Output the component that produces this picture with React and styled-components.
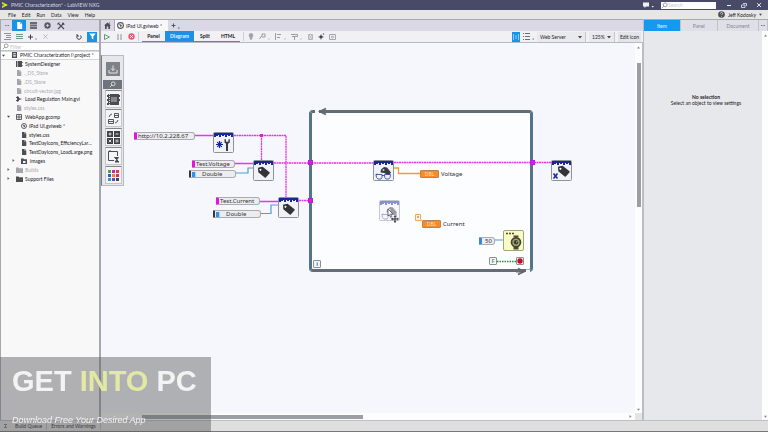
import styled, { createGlobalStyle, css } from "styled-components";

const GlobalStyle = createGlobalStyle`
  * {
    box-sizing: border-box;
  }
  body {
    margin: 0;
    overflow: hidden;
    font-family: Lato, "Open Sans", sans-serif;
    font-size: 5px;
    line-height: 8px;
    color: #232329;
  }
  button, input, select {
    font: inherit;
    color: inherit;
    margin: 0;
    padding: 0;
    border: 0;
    border-radius: 0;
    background: none;
  }
  svg {
    display: block;
    flex: none;
  }
`;

const Window = styled.div`
  display: flex;
  flex-direction: column;
  height: 100vh;
  background: #e4e4e3;
  border-bottom: 1px solid #77777b;
`;

const TitleBar = styled.header`
  display: flex;
  align-items: center;
  height: 10px;
  flex: none;
  padding: 0 3px 0 2px;
  gap: 3px;
  background: #484a67;
  color: #d9dae4;
`;

const Title = styled.h1`
  margin: 0;
  flex: 1;
  font-size: 5px;
  font-weight: 400;
`;

const SearchBox = styled.label`
  display: flex;
  align-items: center;
  width: 55px;
  height: 7px;
  margin: 0 4px;
  background: #fff;
  input {
    width: 40px;
    height: 7px;
    outline: 0;
  }
  input::placeholder {
    color: #c8c8d0;
  }
`;

const WindowButton = styled.button`
  display: grid;
  place-items: center;
  width: 12px;
  height: 9px;
`;

const MenuBar = styled.nav`
  display: flex;
  align-items: center;
  flex: none;
  height: 9px;
  padding: 0 6px 0 8px;
  gap: 6px;
  background: #e6e6e4;
`;

const MenuItem = styled.button`
  line-height: 8px;
`;

const User = styled.button`
  display: flex;
  align-items: center;
  gap: 3px;
  margin-left: auto;
`;

const Main = styled.div`
  display: flex;
  flex: 1;
  min-height: 0;
`;

const Sidebar = styled.aside`
  display: flex;
  flex-direction: column;
  width: 101px;
  flex: none;
  background: #f8f8f9;
  border-left: 1px solid #a7a7b2;
  border-right: 2px solid #a7a7b0;
`;

const TabStrip = styled.div`
  display: flex;
  flex: none;
  height: 12px;
  background: #d9d8e4;
  border-top: 1px solid #a9a9b6;
`;

const IconTab = styled.button`
  display: grid;
  place-items: center;
  width: ${({ $w }) => $w || 14}px;
  background: ${({ $active }) => ($active ? "#1793ea" : "transparent")};
`;

const Toolbar = styled.div`
  display: flex;
  align-items: center;
  flex: none;
  height: 12px;
  gap: ${({ $gap }) => $gap || 3}px;
  padding: 0 2px;
  background: #f1f1f5;
  border-bottom: 1px solid #b9b9c6;
`;

const ToolButton = styled.button`
  display: grid;
  place-items: center;
  width: ${({ $w }) => $w || 8}px;
  height: 10px;
  background: ${({ $active }) => ($active ? "#1793ea" : "transparent")};
`;

const Spacer = styled.div`
  flex: 1;
`;

const FilterBox = styled.label`
  display: flex;
  align-items: center;
  flex: none;
  height: 8px;
  gap: 1px;
  padding-left: 1px;
  background: #fff;
  border-bottom: 1px solid #c4c4cc;
  input {
    width: 70px;
    height: 7px;
    outline: 0;
  }
  input::placeholder {
    color: #c2c2ca;
  }
`;

const Tree = styled.ul`
  display: grid;
  grid-auto-rows: 1fr;
  height: 132px;
  margin: 0;
  padding: 0;
  list-style: none;
  line-height: 6px;
`;

const TreeRow = styled.li`
  display: flex;
  align-items: center;
  gap: 2px;
  padding-left: ${({ $depth }) => 1 + $depth * 5}px;
  color: ${({ $dim }) => ($dim ? "#a9a9ae" : "#212126")};
  white-space: nowrap;
  ${({ $root }) =>
    $root &&
    css`
      background: #fff;
      border: 1px solid #d6d6dd;
      border-width: 1px 0;
    `}
`;

const Twisty = styled.span`
  width: 7px;
  height: 4px;
  display: grid;
  place-items: center start;
`;

const Editor = styled.main`
  display: flex;
  flex-direction: column;
  flex: 1;
  min-width: 0;
`;

const HomeTab = styled.button`
  display: grid;
  place-items: center;
  width: 14px;
  border-right: 1px solid #a9a9b6;
`;

const FileTab = styled.button`
  display: flex;
  align-items: center;
  gap: 2px;
  width: 53px;
  padding-left: 2px;
  background: #f8f8fb;
`;

const AddTab = styled.button`
  display: grid;
  place-items: center;
  width: 14px;
`;

const Separator = styled.span`
  width: 1px;
  height: 9px;
  background: #cfcfd8;
`;

const Views = styled.div`
  display: flex;
  height: 11px;
`;

const ViewButton = styled.button`
  width: ${({ $w }) => $w}px;
  border-bottom: 1px solid #3f8fc8;
  background: ${({ $active }) => ($active ? "#1f8fe3" : "transparent")};
  color: ${({ $active }) => ($active ? "#e4f3ff" : "#222")};
  font-weight: 700;
`;

const Picker = styled.label`
  display: flex;
  align-items: center;
  width: ${({ $w }) => $w}px;
  height: 10px;
  padding: 0 3px;
  background: #e9e9ee;
  border-right: 1px solid #c6c6d0;
  select {
    flex: 1;
    min-width: 0;
    appearance: none;
    outline: 0;
  }
`;

const EditIcon = styled.button`
  width: 23px;
  height: 10px;
  background: #e3e3e9;
  white-space: nowrap;
`;

const Workspace = styled.div`
  display: grid;
  grid-template-columns: 1fr 7px;
  grid-template-rows: 1fr 7px;
  flex: 1;
  min-height: 0;
  border-right: 1px solid #bcbcc6;
`;

const Canvas = styled.section`
  position: relative;
  overflow: hidden;
  background: #f5f7fc;
`;

const Scroll = styled.div`
  display: flex;
  flex-direction: ${({ $across }) => ($across ? "row" : "column")};
  align-items: center;
  justify-content: space-between;
  padding: ${({ $across }) => ($across ? "1px 3px 1px 41px" : "3px 1px 2px")};
  background: #fdfdfe;
`;

const Thumb = styled.div`
  background: #9d9ea3;
  ${({ $across, $size }) =>
    $across
      ? css`
          width: ${$size}px;
          height: 4px;
        `
      : css`
          width: 4px;
          height: ${$size}px;
          margin: 14px 0 auto;
        `}
`;

const Palette = styled.div`
  position: absolute;
  left: 0;
  top: 12px;
  width: 23px;
  padding: 1px;
  background: #e6e7ea;
  border: 1px solid #b9bac0;
  border-left-color: #777a82;
`;

const PaletteTop = styled.button`
  display: grid;
  place-items: center;
  width: 100%;
  height: 23px;
`;

const PaletteSearch = styled.button`
  display: grid;
  place-items: center;
  width: 100%;
  height: 9px;
  background: #6f747c;
`;

const PaletteItem = styled.button`
  display: grid;
  place-items: center;
  width: 17px;
  height: 18px;
  margin: 1px 0 0 2px;
  background: #f4f4f6;
  border: 1px solid #c5c6cb;
  border-top-color: #82858b;
`;

const Wires = styled.svg`
  position: absolute;
  left: 0;
  top: 0;
`;

const Placed = styled.div`
  position: absolute;
  left: ${({ $x }) => $x}px;
  top: ${({ $y }) => $y}px;
`;

const Loop = styled(Placed)`
  width: 224px;
  height: 162px;
  background: #fbfdff;
  border: 3px solid #557389;
  border-top-color: #646d77;
  border-bottom-color: #646d77;
  border-radius: 4px;
`;

const Constant = styled(Placed)`
  display: flex;
  align-items: center;
  width: ${({ $w }) => $w}px;
  height: 8px;
  padding-left: ${({ $indent }) => $indent || 1}px;
  font: 6px/6px "Noto Sans", sans-serif;
  white-space: nowrap;
  color: #2f2f35;
  background: #ededf0;
  border: 1px solid #aaaab0;
  border-left: ${({ $edge }) => $edge || "3px solid #e513de"};
  border-radius: 1px 3px 3px 1px;
`;

const TypeMark = styled.span`
  width: 4px;
  height: 5px;
  margin-right: 6px;
  background: #2f93e8;
  border-right: 1px solid #a8d4fa;
`;

const Terminal = styled(Placed)`
  display: grid;
  place-items: center;
  width: 19px;
  height: 8px;
  font: 5px/5px "Noto Sans", sans-serif;
  color: #ffe3c4;
  background: #f98a25;
  border: 1px solid #b98352;
  border-radius: 1px;
`;

const Label = styled(Placed)`
  font: 6px/8px "Noto Sans", sans-serif;
  color: #2a2a30;
`;

const Tunnel = styled(Placed)`
  width: 5px;
  height: 5px;
  background: #f010e4;
  border: 1px solid #a726d6;
`;

const Chip = styled(Placed)`
  display: grid;
  place-items: center;
  width: 8px;
  height: 8px;
  font: 600 6px/6px "Noto Sans", sans-serif;
  color: ${({ $color }) => $color};
  background: #f4f5f8;
  border: 1px solid #8b8f98;
  border-radius: 1px;
`;

const Inspector = styled.aside`
  display: flex;
  flex-direction: column;
  width: 125px;
  flex: none;
  background: #e7e8ec;
  border-left: 1px solid #bcbcc6;
`;

const InspectorTab = styled.button`
  flex: ${({ $grow }) => $grow} 0 0;
  background: ${({ $active }) => ($active ? "#139af0" : "#dfdfe7")};
  color: ${({ $active }) => ($active ? "#e8f6ff" : "#85858d")};
  border-right: 1px solid #c1c1cb;
  svg {
    margin: 0 auto;
  }
`;

const InspectorBody = styled.div`
  display: grid;
  grid-template-columns: 1fr 6px;
  flex: 1;
`;

const Empty = styled.div`
  padding: 63px 0 0 6px;
  text-align: center;
  line-height: 6px;
  p {
    margin: 0;
  }
`;

const StatusBar = styled.footer`
  display: flex;
  align-items: center;
  flex: none;
  height: 11px;
  padding-left: 4px;
  background: #dfdfdf;
  border-top: 1px solid #bebec4;
  svg {
    margin-right: 4px;
  }
`;

const StatusTab = styled.button`
  padding: 0 4px;
  border-right: 1px solid #b9b9be;
`;

const Watermark = styled.div`
  position: fixed;
  left: 0;
  bottom: 0;
  width: 211px;
  height: 75px;
  padding: 7px 12px 0;
  background: rgba(88, 89, 92, 0.45);
  font-family: "Liberation Sans", Arial, sans-serif;
  color: #f3f3f4;
  white-space: nowrap;
  pointer-events: none;
  p {
    margin: 0;
  }
`;

const Brand = styled.p`
  font-size: 29px;
  font-weight: 700;
  line-height: 34px;
  span {
    color: #e3e8a5;
  }
`;

const Slogan = styled.p`
  padding-top: 16px;
  font-size: 9px;
  font-style: italic;
  line-height: 12px;
`;

function Caret({ color = "#44444c", size = 4 }) {
  return (
    <svg width={size} height={size} viewBox="0 0 4 4">
      <path d="M0 1h4L2 3.5z" fill={color} />
    </svg>
  );
}

function Magnifier({ color = "#85858e", size = 7 }) {
  return (
    <svg width={size} height={size} viewBox="0 0 7 7" fill="none" stroke={color} strokeWidth="0.8">
      <circle cx="4.2" cy="2.8" r="1.9" />
      <path d="M2.8 4.2L.8 6.2" />
    </svg>
  );
}

function PageIcon({ color = "#5c5c64", size = 6 }) {
  return (
    <svg width={size} height={size} viewBox="0 0 6 6">
      <path d="M1 0h2.6v1.8h1.7V6H1zM4 0l1.3 1.4H4z" fill={color} />
    </svg>
  );
}

function GlobeIcon({ size = 7 }) {
  return (
    <svg width={size} height={size} viewBox="0 0 7 7" fill="none">
      <circle cx="3.5" cy="3.5" r="2.9" stroke="#55555c" strokeWidth="1.1" />
      <path d="M2 2l2 .4 1 1.4-1.4 1.4L3 3.8z" fill="#55555c" />
    </svg>
  );
}

function TreeIcon({ kind, dim }) {
  const color = dim ? "#a3a3a9" : "#4e4e56";
  if (kind === "page") return <PageIcon color={color} />;
  if (kind === "globe") return <GlobeIcon size={6} />;
  return (
    <svg width="7" height="6" viewBox="0 0 7 6" fill={color}>
      {kind === "project" && <path d="M1 0h5v6H1zM2.2 1.2v1h2.6v-1zm0 2v1.4h2.6V3.2z" fillRule="evenodd" />}
      {kind === "system" && <path d="M0 0h1v6H0zM1.6 0H6v6H1.6zM6.3 1h.7v1h-.7zm0 3h.7v1h-.7z" />}
      {kind === "vi" && <path d="M1 0l2 1v1l3 1-3 1v1L1 6zM0 1h1v1H0zm0 3h1v1H0z" />}
      {kind === "component" && (
        <path d="M.5.5h5v5h-5zM.5 3h5M3 .5v5" fill="none" stroke={color} strokeWidth="0.9" />
      )}
      {kind === "folder" && <path d="M0 .5h2.5l.7.8H7V6H0z" />}
      {kind === "images" && <path d="M0 .5h2.5l.7.8H6V6H0zM2 3v2h2.5V3z" fillRule="evenodd" />}
    </svg>
  );
}

const FILES = [
  { name: "PMIC Characterization I\\project *", kind: "project", depth: 0, open: true, root: true },
  { name: "SystemDesigner", kind: "system", depth: 1 },
  { name: "._DS_Store", kind: "page", depth: 1, dim: true },
  { name: ".DS_Store", kind: "page", depth: 1, dim: true },
  { name: "circuit-vector.jpg", kind: "page", depth: 1, dim: true },
  { name: "Load Regulation Main.gvi", kind: "vi", depth: 1 },
  { name: "styles.css", kind: "page", depth: 1, dim: true },
  { name: "WebApp.gcomp", kind: "component", depth: 1, open: true },
  { name: "iPad UI.gviweb *", kind: "globe", depth: 2 },
  { name: "styles.css", kind: "page", depth: 2 },
  { name: "TestDayIcons_EfficiencyLar...", kind: "page", depth: 2 },
  { name: "TestDayIcons_LoadLarge.png", kind: "page", depth: 2 },
  { name: "images", kind: "images", depth: 2, closed: true },
  { name: "Builds", kind: "folder", depth: 1, dim: true, closed: true },
  { name: "Support Files", kind: "folder", depth: 1, closed: true },
];

function ProjectTree() {
  return (
    <Tree>
      {FILES.map(({ name, kind, depth, dim, open, closed, root }, i) => (
        <TreeRow key={i} $depth={depth} $dim={dim} $root={root}>
          <Twisty>
            {open && <Caret size={3} />}
            {closed && (
              <svg width="3" height="3" viewBox="0 0 3 3">
                <path d="M.5 0L2.5 1.5L.5 3z" fill="#66666e" />
              </svg>
            )}
          </Twisty>
          <TreeIcon kind={kind} dim={dim} />
          {name}
        </TreeRow>
      ))}
    </Tree>
  );
}

function TagShape() {
  return (
    <path
      d="M5 8.6Q5 7.8 5.8 7.6L9.6 6.7 16.5 12.3Q17 12.8 16.6 13.3L12.8 17.4Q12.3 17.9 11.7 17.4L5.3 12.2zM7.4 8.7a1 1 0 1 0 .1 0z"
      fill="#333438"
      fillRule="evenodd"
    />
  );
}

function VINode({ x, y, kind, faded }) {
  return (
    <Placed $x={x} $y={y}>
      <svg width="21" height="21" viewBox="0 0 21 21" opacity={faded ? 0.5 : 1}>
        <rect x=".5" y=".5" width="20" height="20" rx="1" fill="#f1f2f6" stroke="#8f929c" />
        <path
          d="M1 1h19v4h-2V3h-1v1h-2V3h-1v2h-2V3h-1v1h-2V3H8v2H6V3H5v1H3V3v2H1z"
          fill="#1a2793"
        />
        {kind === "open" && (
          <>
            <path d="M6.5 9v7M3 12.5h7M4.200 10.2l4.600 4.600M8.800 10.2l-4.600 4.600" stroke="#16259c" strokeWidth="1.2" />
            <path d="M11.5 7v3.500l1.500 1.300V19h2v-7.200l1.800-1.300V7l-1.400.5v2.200h-2.400V7.500z" fill="#393a3f" />
          </>
        )}
        {kind === "tag" && <TagShape />}
        {kind === "close" && (
          <>
            <g transform="translate(2 -1)">
              <TagShape />
            </g>
            <path d="M2.500 13.500l4 5M6.500 13.500l-4 5" stroke="#16259c" strokeWidth="1.5" />
          </>
        )}
        {kind === "read" && (
          <>
            <path d="M8 9.500l3-2.500 3 .5 4 5-2.500 3.500-4-3-4-.5z" fill="#3a3b41" />
            <circle cx="10.500" cy="10" r="1" fill="#c9ccd6" />
            <path
              d="M3 14.500h6v3l-1 1.500H5l-1.500-1.500zM11.500 14.500h6l-.5 3-1.200 1.500h-2.800l-1.200-1.500zM9 15.500h2.500M3 14.500l1-1"
              fill="#f1f3fb"
              stroke="#27399e"
              strokeWidth="0.8"
            />
          </>
        )}
      </svg>
    </Placed>
  );
}

function DiagramWires() {
  return (
    <Wires width="534" height="371" viewBox="0 0 534 371" fill="none">
      <g stroke="#ea35e4" strokeWidth="1.3">
        <path d="M94 92.500h19M134 120.500h20M159 158.500h20" />
        <g strokeDasharray="2 .5">
          <path d="M133 92.500h52v63M160.500 92.500V118" />
          <path d="M173 120h99M293 119.500h158M198 157.500h12" />
        </g>
      </g>
      <rect x="159" y="91" width="3" height="3" fill="#df18d9" />
      <path d="M134 130h13v-5h6M160 170.500h10v-8.500h8M393 197h10" stroke="#4d9fd6" strokeWidth="1.2" />
      <path d="M293 125h4.500v5.500H319" stroke="#f1994a" strokeWidth="1.3" />
      <path d="M396 218.500h19" stroke="#27933b" strokeWidth="1.3" strokeDasharray="1.5 1" />
      <path d="M214 68.500h4M425 228.500h4" stroke="#f6f8fc" strokeWidth="4" />
      <path d="M218 68.500h7M415 228.500h8" stroke="#646d77" strokeWidth="2" />
      <path d="M225 65.500l-6 3 6 3M417 225.500l6 3-6 3" stroke="#62676e" strokeWidth="1.8" />
    </Wires>
  );
}

function Diagram() {
  return (
    <>
      <Loop $x={208} $y={67} />
      <DiagramWires />

      <Constant $x={33} $y={89} $w={61}>http://10.2.228.67</Constant>
      <VINode x={112} y={89} kind="open" />
      <Constant $x={91} $y={117} $w={43}>Test.Voltage</Constant>
      <Constant $x={88} $y={127} $w={47} $edge="2px solid #35363c">
        <TypeMark />
        Double
      </Constant>
      <VINode x={152} y={117} kind="tag" />
      <Constant $x={115} $y={154} $w={44}>Test.Current</Constant>
      <Constant $x={112} $y={167} $w={48} $edge="2px solid #35363c">
        <TypeMark />
        Double
      </Constant>
      <VINode x={177} y={154} kind="tag" />

      <Tunnel $x={207} $y={117} />
      <Tunnel $x={207} $y={155} />
      <Tunnel $x={429} $y={117} />

      <VINode x={272} y={117} kind="read" />
      <Terminal $x={319} $y={127}>DBL</Terminal>
      <Label $x={340} $y={127}>Voltage</Label>

      <VINode x={278} y={157} kind="read" faded />
      <Placed $x={286} $y={166}>
        <svg width="13" height="14" viewBox="0 0 13 14">
          <path d="M1 0l5 5H3.500l1.300 2.600-1.200.6L2.300 5.600 1 7z" fill="#fff" stroke="#555761" strokeWidth="0.8" />
          <path
            d="M8 6l1.500 1.700H8.500v1.800h1.800V8.500L12 10l-1.700 1.500v-1H8.500v1.800h1L8 14l-1.500-1.700h1v-1.800H5.700v1L4 10l1.700-1.500v1h1.800V7.700h-1z"
            fill="#36373d"
          />
        </svg>
      </Placed>
      <Placed $x={314} $y={171}>
        <svg width="7" height="7" viewBox="0 0 7 7">
          <path d="M.5.500h5v4l1 2H.5z" fill="#fff2e2" stroke="#f3a65e" />
          <circle cx="3" cy="3" r="1" fill="#ee8a2d" />
        </svg>
      </Placed>
      <Terminal $x={321} $y={177}>DBL</Terminal>
      <Label $x={342} $y={177}>Current</Label>

      <Constant $x={378} $y={194} $w={16} $indent={3} $edge="3px solid #3c86dc">50</Constant>
      <Placed $x={402} $y={187}>
        <svg width="21" height="21" viewBox="0 0 21 21">
          <rect x=".5" y=".5" width="20" height="20" rx="1.5" fill="#fafbc2" stroke="#a1a37c" />
          <path d="M3 3.500h2M6 3.500h2M9 3.500h2" stroke="#4d4d35" strokeWidth="1.5" />
          <path d="M10.500 5.500h5v2h-5zM10.500 17h5v2.500h-5z" fill="#4b4b34" />
          <circle cx="13" cy="12.300" r="4.500" fill="#a6a77a" stroke="#44442f" strokeWidth="1.7" />
          <circle cx="13" cy="12.300" r="2.200" fill="#3c3c2a" />
          <path d="M13 12.300l1.500-1" stroke="#f1f1b6" strokeWidth="0.8" />
        </svg>
      </Placed>
      <Chip $x={388} $y={214} $color="#3f9b50">F</Chip>
      <Chip $x={415} $y={214}>
        <svg width="6" height="6" viewBox="0 0 6 6">
          <circle cx="3" cy="3" r="2.7" fill="#c20f28" />
        </svg>
      </Chip>
      <Chip $x={212} $y={217} $color="#2766c4">i</Chip>
      <VINode x={450} y={117} kind="close" />
    </>
  );
}

const SWATCHES = [
  "#46a84b", "#b331b8", "#e04038",
  "#3457c9", "#e8852c", "#d43168",
  "#2e9ac2", "#7c3fc0", "#47464d",
];

function FunctionPalette() {
  return (
    <Palette>
      <PaletteTop aria-label="Place">
        <svg width="14" height="14" viewBox="0 0 14 14" fill="none">
          <path d="M0 0h14v14H0z" fill="#7e8187" />
          <path d="M7 3.500v5M5 6.500l2 2 2-2M3 8v3h8V8" stroke="#e3e4e7" />
        </svg>
      </PaletteTop>
      <PaletteSearch aria-label="Search palette">
        <Magnifier color="#f0f0f2" />
      </PaletteSearch>
      <PaletteItem aria-label="Program flow">
        <svg width="13" height="13" viewBox="0 0 13 13">
          <path d="M1 1h11v11H1z" fill="#4a4c52" />
          <path d="M4 4h6v5H4z" fill="#85888f" />
          <path d="M0 2h1v2H0zM0 6h1v2H0zM0 10h1v2H0zM12 2h1v2h-1zM12 6h1v2h-1z" fill="#4a4c52" />
          <path d="M2.500 1v11" stroke="#dadbe0" strokeDasharray="1 1" />
        </svg>
      </PaletteItem>
      <PaletteItem aria-label="Data types">
        <svg width="13" height="13" viewBox="0 0 13 13" fill="none" stroke="#55575e">
          <path d="M7.500 1.500h4v4h-4zM1.500 7.500h5v4h-5zM7.500 3.500h4M1.500 9.500h5" />
          <path d="M2 5l1-2 2-1M11 8l-1 2-2 1" />
        </svg>
      </PaletteItem>
      <PaletteItem aria-label="Math">
        <svg width="13" height="13" viewBox="0 0 13 13">
          <path d="M0 0h6v6H0zM7 0h6v6H7zM0 7h6v6H0zM7 7h6v6H7z" fill="#3f4147" />
          <path
            d="M3 1.500v3M1.500 3h3M8.500 3h3M1.700 8.700l2.600 2.600M4.300 8.700l-2.600 2.600M8.500 9.200h3M8.500 10.800h3"
            stroke="#f0f0f2"
            strokeWidth="0.9"
          />
        </svg>
      </PaletteItem>
      <PaletteItem aria-label="Loops">
        <svg width="13" height="13" viewBox="0 0 13 13" fill="none" stroke="#4a4c52">
          <path d="M7 10.500H1.500v-9h9V6M3.500.500l-2 1" />
          <path d="M7.500 7.500h4L8 12h4z" fill="#4a4c52" />
        </svg>
      </PaletteItem>
      <PaletteItem aria-label="Hardware">
        <svg width="11" height="11" viewBox="0 0 11 11">
          {SWATCHES.map((fill, i) => (
            <rect key={fill} x={(i % 3) * 4} y={Math.floor(i / 3) * 4} width="3" height="3" fill={fill} />
          ))}
        </svg>
      </PaletteItem>
    </Palette>
  );
}

function SidebarPanel() {
  return (
    <Sidebar>
      <TabStrip>
        <IconTab aria-label="Collapse" $w={11}>
          <svg width="4" height="2" viewBox="0 0 4 2">
            <path d="M0 .5h1.500M2.500.500H4" stroke="#77777f" />
          </svg>
        </IconTab>
        <IconTab aria-label="Files" $active>
          <PageIcon color="#fff" size={7} />
        </IconTab>
        <IconTab aria-label="Hardware">
          <svg width="7" height="7" viewBox="0 0 7 7">
            <path d="M0 0h7v2H0zM0 2.500h7v2H0zM0 5h7v2H0z" fill="#6a6a72" />
          </svg>
        </IconTab>
        <IconTab aria-label="Data">
          <svg width="7" height="7" viewBox="0 0 7 7">
            <circle cx="3.500" cy="3.500" r="3.200" fill="#5d5d65" />
            <path d="M2 3.500h3M3.500 2v3" stroke="#d9d8e4" strokeWidth="0.8" />
          </svg>
        </IconTab>
        <IconTab aria-label="Tools">
          <svg width="8" height="8" viewBox="0 0 8 8" stroke="#4a4a52" fill="none">
            <path d="M1 1l6 6M7 1L1 7" strokeWidth="1.1" />
            <path d="M0 2.500L2.500.500M5.500.500v2h2" strokeWidth="0.8" />
          </svg>
        </IconTab>
      </TabStrip>
      <Toolbar $gap={4}>
        <ToolButton aria-label="Outline">
          <svg width="7" height="7" viewBox="0 0 7 7" stroke="#77777f">
            <path d="M0 .5h7M2 2.500h5M2 4.500h5M0 6.500h7" strokeWidth="0.8" />
          </svg>
        </ToolButton>
        <ToolButton aria-label="List">
          <svg width="7" height="7" viewBox="0 0 7 7" stroke="#5c8f73">
            <path d="M0 1.500h7M0 3.500h7M0 5.500h7" strokeWidth="0.9" />
          </svg>
        </ToolButton>
        <ToolButton aria-label="Add" $w={10}>
          <svg width="9" height="6" viewBox="0 0 9 6" stroke="#3b3b42">
            <path d="M2.500.500v5M0 3h5M7.500 5h1" />
          </svg>
        </ToolButton>
        <ToolButton aria-label="Remove">
          <svg width="5" height="5" viewBox="0 0 5 5" stroke="#a9a9b0">
            <path d="M.5.500l4 4M4.500.500l-4 4" strokeWidth="0.8" />
          </svg>
        </ToolButton>
        <Spacer />
        <ToolButton aria-label="Refresh">
          <svg width="6" height="6" viewBox="0 0 6 6" stroke="#45454d" fill="none">
            <path d="M1.500 1.500a2.200 2.200 0 1 0 3 0M0 1h2v2" />
          </svg>
        </ToolButton>
        <ToolButton aria-label="Filter" $active $w={10}>
          <svg width="7" height="7" viewBox="0 0 7 7">
            <path d="M.3.500h6.400L4.300 3.500V6.500L2.700 5.500v-2z" fill="#fff" />
          </svg>
        </ToolButton>
      </Toolbar>
      <FilterBox>
        <Magnifier />
        <input aria-label="Filter files" placeholder="Filter" />
      </FilterBox>
      <ProjectTree />
    </Sidebar>
  );
}

function EditorToolbar() {
  return (
    <Toolbar>
      <ToolButton aria-label="Run">
        <svg width="7" height="6" viewBox="0 0 7 6">
          <path d="M.5.500L5.500 3 .5 5.500z" fill="#e8f5ea" stroke="#5f9f73" />
        </svg>
      </ToolButton>
      <ToolButton aria-label="Pause" $w={10}>
        <svg width="5" height="6" viewBox="0 0 5 6" stroke="#8e8e98">
          <path d="M1 0v6M4 0v6" />
        </svg>
      </ToolButton>
      <ToolButton aria-label="Abort">
        <svg width="7" height="7" viewBox="0 0 7 7">
          <circle cx="3.500" cy="3.500" r="3.200" fill="#ee5777" />
          <path d="M2.200 2.200l2.600 2.600M4.800 2.200L2.200 4.800" stroke="#fff" />
        </svg>
      </ToolButton>
      <Separator />
      <Views>
        <ViewButton $w={23}>Panel</ViewButton>
        <ViewButton $w={29} $active>Diagram</ViewButton>
        <ViewButton $w={22}>Split</ViewButton>
        <ViewButton $w={24}>HTML</ViewButton>
      </Views>
      <Separator />
      <ToolButton aria-label="Highlight execution">
        <svg width="6" height="7" viewBox="0 0 6 7" fill="#a3a3b0">
          <path d="M3 0a2.500 2.500 0 0 1 1.300 4.500V6L3 7 1.700 6V4.500A2.500 2.500 0 0 1 3 0z" />
        </svg>
      </ToolButton>
      <ToolButton $w={13} aria-label="Arrange">
        <svg width="11" height="7" viewBox="0 0 11 7" stroke="#9b9ba8" fill="none">
          <path d="M.5 6l2-3M3 1h3v3H3zM9.500 6h1" />
        </svg>
      </ToolButton>
      <ToolButton $w={13} aria-label="Align">
        <svg width="11" height="7" viewBox="0 0 11 7" stroke="#9b9ba8" fill="none">
          <path d="M.5 0v7M2 1.500h4M2 4.500h3M9.500 6h1" />
        </svg>
      </ToolButton>
      <ToolButton $w={13} aria-label="Distribute">
        <svg width="11" height="7" viewBox="0 0 11 7" stroke="#9b9ba8" fill="none">
          <path d="M0 1.500h6.500v2H1M3.500 4v3M9.500 6h1" />
        </svg>
      </ToolButton>
      <ToolButton aria-label="Group">
        <svg width="5" height="6" viewBox="0 0 5 6" stroke="#a7a7b2" fill="none">
          <path d="M.5.500h4v5h-4zM1 1l3 4M4 1L1 5" strokeWidth="0.8" />
        </svg>
      </ToolButton>
      <ToolButton aria-label="Clean up">
        <svg width="7" height="7" viewBox="0 0 7 7">
          <path d="M3 1l.8 2L6 4l-2.200.8L3 7l-.8-2.200L0 4l2.200-.9z" fill="#3d3d45" />
          <path d="M5.500 0v2M4.500 1h2" stroke="#77777f" strokeWidth="0.6" />
        </svg>
      </ToolButton>
      <ToolButton aria-label="Capture">
        <svg width="7" height="6" viewBox="0 0 7 6" stroke="#a7a7b2" fill="none">
          <path d="M.5.500h6v5h-6z" />
          <circle cx="3.500" cy="3" r="1" />
        </svg>
      </ToolButton>
      <Spacer />
      <ToolButton aria-label="Context help" $active>
        <svg width="6" height="6" viewBox="0 0 6 6" stroke="#e3f2fd" fill="none">
          <path d="M.5 0v6M5.500 0v6M2.500 1.500h1M3 2v3" strokeWidth="0.6" />
        </svg>
      </ToolButton>
      <ToolButton $w={11} aria-label="Targets">
        <svg width="11" height="7" viewBox="0 0 11 7" stroke="#5b5b64" fill="none">
          <path d="M0 .5h1M2 .5h5M0 3.500h1M2 3.500h5M0 6.500h1M2 6.500h5M9.500 6h1.500" strokeWidth="0.9" />
        </svg>
      </ToolButton>
      <Picker $w={49}>
        <select aria-label="Target">
          <option>Web Server</option>
        </select>
        <Caret />
      </Picker>
      <Picker $w={26}>
        <select aria-label="Zoom">
          <option>125%</option>
        </select>
        <Caret />
      </Picker>
      <EditIcon>Edit icon</EditIcon>
    </Toolbar>
  );
}

export default function App() {
  return (
    <>
      <GlobalStyle />
      <Window>
        <TitleBar>
          <svg width="6" height="6" viewBox="0 0 6 6">
            <path d="M0 0l6 3-6 3z" fill="#e9e22e" />
            <path d="M0 1.500L2.500 3 0 4.500z" fill="#3c8f4a" />
          </svg>
          <Title>PMIC Characterization* - LabVIEW NXG</Title>
          <svg width="11" height="6" viewBox="0 0 11 6">
            <path d="M0 .5h6v4H3L1.500 6V4.500H0zM8.500 4h2.500L9.700 5.500z" fill="#f1f1f5" />
          </svg>
          <SearchBox>
            <Magnifier />
            <input aria-label="Search" placeholder="Search" />
          </SearchBox>
          <WindowButton aria-label="Minimize">
            <svg width="4" height="4" viewBox="0 0 4 4" stroke="#eee">
              <path d="M0 2.500h4" />
            </svg>
          </WindowButton>
          <WindowButton aria-label="Restore">
            <svg width="6" height="5" viewBox="0 0 6 5" stroke="#eee" fill="none">
              <path d="M.5 2h3.500v2.500H.5zM2 .5h3.500V3" strokeWidth="0.8" />
            </svg>
          </WindowButton>
          <WindowButton aria-label="Close">
            <svg width="4" height="4" viewBox="0 0 4 4" stroke="#eee">
              <path d="M0 0l4 4M4 0L0 4" strokeWidth="0.9" />
            </svg>
          </WindowButton>
        </TitleBar>
        <MenuBar>
          {["File", "Edit", "Run", "Data", "View", "Help"].map((item) => (
            <MenuItem key={item}>{item}</MenuItem>
          ))}
          <User>
            <svg width="7" height="7" viewBox="0 0 7 7" fill="none">
              <circle cx="3.500" cy="3.500" r="3.300" fill="#4c4c53" />
              <path d="M2.400 2.600c0-1.500 2.300-1.500 2.300 0 0 .8-1.200.8-1.200 1.600M3.500 5v.7" stroke="#eee" strokeWidth="0.8" />
            </svg>
            Jeff Kodosky
            <Caret size={3} />
          </User>
        </MenuBar>
        <Main>
          <SidebarPanel />
          <Editor>
            <TabStrip>
              <HomeTab aria-label="Home">
                <svg width="7" height="7" viewBox="0 0 7 7" fill="#4d4d55">
                  <path d="M3.500.500L7 3.500H6V7H4.300V4.500H2.700V7H1V3.500H0zM5 .5h1v1.500L5 1z" />
                </svg>
              </HomeTab>
              <FileTab>
                <GlobeIcon />
                iPad UI.gviweb *
              </FileTab>
              <AddTab aria-label="New tab">
                <svg width="9" height="6" viewBox="0 0 9 6" stroke="#4a4a52">
                  <path d="M2.500.500v4M.5 2.500h4M7 5h1.500" strokeWidth="0.9" />
                </svg>
              </AddTab>
            </TabStrip>
            <EditorToolbar />
            <Workspace>
              <Canvas>
                <Diagram />
                <FunctionPalette />
              </Canvas>
              <Scroll>
                <svg width="3" height="3" viewBox="0 0 3 3">
                  <path d="M0 2.500h3L1.500.500z" fill="#85858c" />
                </svg>
                <Thumb $size={144} />
                <Caret size={3} color="#85858c" />
              </Scroll>
              <Scroll $across>
                <Thumb $across $size={221} />
                <svg width="3" height="3" viewBox="0 0 3 3">
                  <path d="M.5 0v3L2.500 1.500z" fill="#85858c" />
                </svg>
              </Scroll>
            </Workspace>
          </Editor>
          <Inspector>
            <TabStrip>
              <InspectorTab $grow={37} $active>Item</InspectorTab>
              <InspectorTab $grow={37}>Panel</InspectorTab>
              <InspectorTab $grow={42}>Document</InspectorTab>
              <InspectorTab $grow={8} aria-label="More">
                <svg width="4" height="1" viewBox="0 0 4 1">
                  <path d="M0 .5h1.500M2.500.500H4" stroke="#77777f" />
                </svg>
              </InspectorTab>
            </TabStrip>
            <InspectorBody>
              <Empty>
                <p>
                  <b>No selection</b>
                </p>
                <p>Select an object to view settings</p>
              </Empty>
              <Scroll>
                <svg width="3" height="3" viewBox="0 0 3 3">
                  <path d="M0 2.500h3L1.500.500z" fill="#85858c" />
                </svg>
                <Caret size={3} color="#85858c" />
              </Scroll>
            </InspectorBody>
          </Inspector>
        </Main>
        <StatusBar>
          <svg width="3" height="4" viewBox="0 0 3 4" stroke="#55555c">
            <path d="M0 .5h3M0 3.500h3M1.500 1v2" strokeWidth="0.7" />
          </svg>
          <StatusTab>Build Queue</StatusTab>
          <StatusTab>Errors and Warnings</StatusTab>
        </StatusBar>
      </Window>
      <Watermark>
        <Brand>
          GET <span>INTO</span> PC
        </Brand>
        <Slogan>Download Free Your Desired App</Slogan>
      </Watermark>
    </>
  );
}
